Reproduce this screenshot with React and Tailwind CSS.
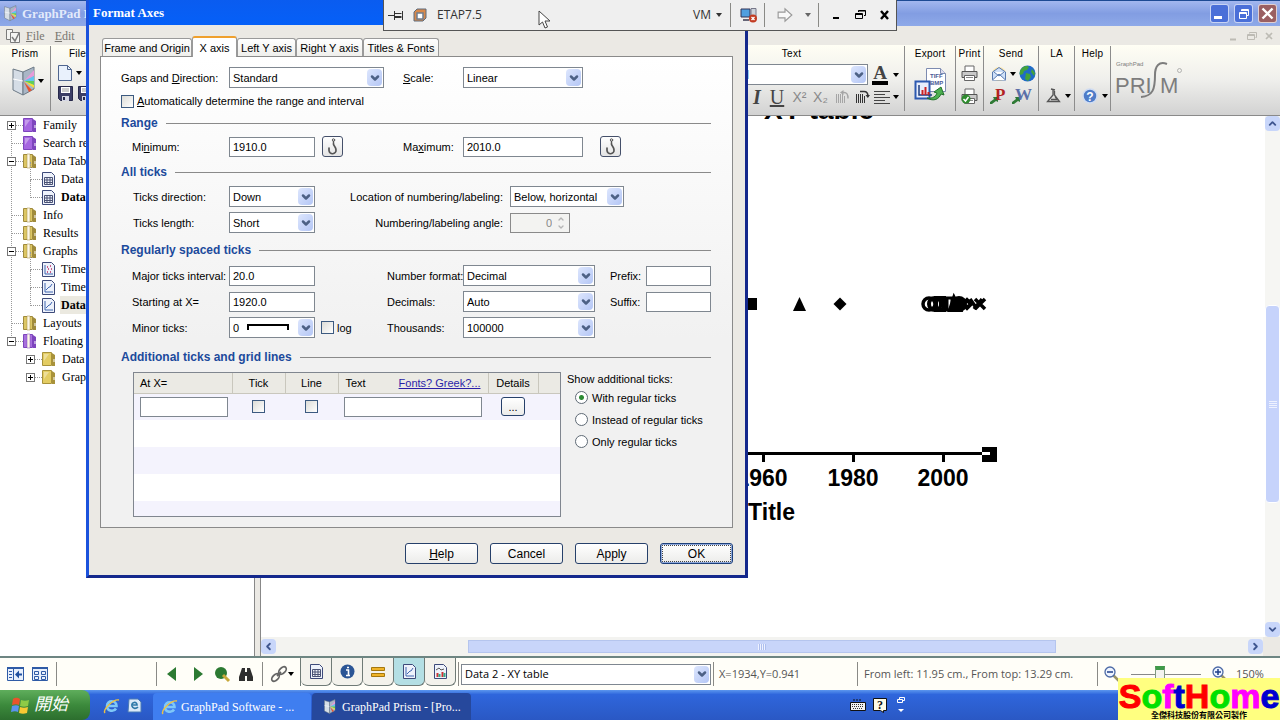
import { useState } from 'react'
import { ChevronDown, ChevronUp, ChevronLeft, ChevronRight } from 'lucide-react'

const UI = "font-['Liberation_Sans',Arial,sans-serif]"
const SERIF = "font-['Liberation_Serif',serif]"

/* ---------- small shared pieces ---------- */

function Caret({ className = 'text-black' }) {
  return (
    <svg width="6" height="4" viewBox="0 0 6 4" className={`shrink-0 ${className}`}>
      <path d="M0 0h6L3 4z" fill="currentColor" />
    </svg>
  )
}

function Select({ id, label, value, className = '', children }) {
  return (
    <div className={`relative h-[21px] shrink-0 ${className}`}>
      <select
        id={id}
        aria-label={label}
        defaultValue={value}
        className="block h-full w-full appearance-none border border-[#7f8790] bg-white pl-[3px] pr-4 text-black outline-none"
      >
        <option value={value}>{value}</option>
      </select>
      {children}
      <span className="pointer-events-none absolute inset-y-[2px] right-[2px] flex w-[15px] items-center justify-center rounded-sm bg-linear-to-br from-[#dde6fd] to-[#b4c6f5]">
        <ChevronDown size={12} strokeWidth={5} color="#4d6185" />
      </span>
    </div>
  )
}

function TextBox({ id, label, value = '', className = '' }) {
  return (
    <input
      id={id}
      aria-label={label}
      type="text"
      defaultValue={value}
      className={`h-5 shrink-0 border border-[#7f8790] bg-white px-[3px] outline-none ${className}`}
    />
  )
}

function Check({ id, label }) {
  return (
    <input
      id={id}
      aria-label={label}
      type="checkbox"
      className="block size-[13px] shrink-0 appearance-none border border-[#3c5a80] bg-linear-to-br from-[#dcdcd7] to-white checked:bg-[#21a121]"
    />
  )
}

function Section({ children, className = '' }) {
  return (
    <div className={`flex h-[14px] items-center gap-2 ${className}`}>
      <h2 className="text-[12px] leading-[14px] font-bold whitespace-nowrap text-[#1c4a9c]">{children}</h2>
      <div className="h-px flex-1 bg-[#8a8a8a]" />
    </div>
  )
}

function HookButton({ label, className = '' }) {
  return (
    <button
      type="button"
      aria-label={label}
      className={`flex size-[21px] shrink-0 items-center justify-center rounded-[3px] border border-[#45506a] bg-linear-to-b from-white to-[#e4e4e4] ${className}`}
    >
      <svg width="11" height="17" viewBox="0 0 11 17" fill="none" stroke="#555" strokeLinecap="round">
        <circle cx="6.5" cy="2" r="1.2" />
        <path d="M6.5 3.5V6" strokeWidth="1.4" />
        <path d="M6.5 6c0 2 2.5 3 2.5 6a3.5 3.5 0 0 1-7 .5L2 10" strokeWidth="1.7" />
      </svg>
    </button>
  )
}

function DialogButton({ children, focused }) {
  return (
    <button
      type="button"
      className={`h-[21px] w-[73px] rounded-[3px] border bg-linear-to-b from-white to-[#ececea] text-[12px] ${
        focused
          ? 'border-[#1c3f7a] shadow-[inset_0_0_0_1px_#8fa9dc] outline outline-1 -outline-offset-3 outline-dotted outline-[#444]'
          : 'border-[#26406a]'
      }`}
    >
      {children}
    </button>
  )
}

function PrismIcon({ size = 24 }) {
  return (
    <svg width={size} height={size * 1.25} viewBox="0 0 24 30" className="shrink-0">
      <path d="M1 3l10 3v23L1 24z" fill="#d5dde6" stroke="#6d7a86" />
      <path d="M11 6L22 1v22l-11 6z" fill="#a9b6c6" stroke="#6d7a86" />
      <path d="M12 15L22 4v6z" fill="#e79ad8" />
      <path d="M12 15l10-5v5z" fill="#62c5f0" />
      <path d="M12 15l10 0v4z" fill="#5fce5a" />
      <path d="M12 15l10 4v3z" fill="#f6e234" />
      <path d="M12 16l8 8-3 2z" fill="#e8532f" />
      <path d="M1 13l10 2" stroke="#fff" />
    </svg>
  )
}

/* ---------- main window chrome ---------- */

function TitleBar() {
  const btn = 'flex size-[19px] items-center justify-center rounded-[3px] border border-white/70'
  return (
    <header className="flex h-[26px] shrink-0 items-center border-t border-[#1d4a94] bg-linear-to-b from-[#a3b7ef] via-[#829de2] to-[#8ea9e8] pr-[3px] pl-1">
      <PrismIcon size={13} />
      <h1 className={`${SERIF} ml-[5px] flex-1 text-[13px] font-bold text-[#e3eafb]`}>GraphPad Prism</h1>
      <div className="flex gap-[5px]">
        <button type="button" aria-label="Minimize" className={`${btn} bg-[#4a6fd8]`}>
          <span className="mt-2 mr-1 h-[3px] w-2 bg-white" />
        </button>
        <button type="button" aria-label="Restore" className={`${btn} bg-[#4a6fd8]`}>
          <svg width="12" height="12" viewBox="0 0 12 12" fill="none" stroke="#fff">
            <path d="M3.500 3V1.500h7v6H9M3.500 2.500h7" />
            <path d="M1.500 4.500h7v6h-7zM1.500 5.500h7" />
          </svg>
        </button>
        <button type="button" aria-label="Close" className={`${btn} bg-[#9a5f62]`}>
          <svg width="13" height="13" viewBox="0 0 13 13" stroke="#fff" strokeWidth="2.400">
            <path d="M1.500 1.500l10 10M11.500 1.500l-10 10" />
          </svg>
        </button>
      </div>
    </header>
  )
}

function MenuBar() {
  return (
    <nav className={`${SERIF} flex h-[19px] shrink-0 items-center bg-[#ebe9e4] pr-[7px] pl-[5px] text-[12px] text-[#77756f]`}>
      <svg width="16" height="16" viewBox="0 0 16 16" fill="#f4f4f2" stroke="#7b7b7b">
        <path d="M1.500 1.500h6v10h-6z" />
        <path d="M5.500 4.500h9v10h-9z" />
        <path d="M7 9l3 4 4-8" fill="none" strokeWidth="1.500" />
      </svg>
      <a href="#file" className="ml-[5px]"><u>F</u>ile</a>
      <a href="#edit" className="ml-[10px]"><u>E</u>dit</a>
      <svg width="44" height="10" viewBox="0 0 44 10" fill="none" stroke="#bdbbb4" className="ml-auto">
        <path d="M1 8.500h6" strokeWidth="2" />
        <path d="M20.500 2.500v-1h7v5h-1M18.500 3.500h7v5h-7zM18.500 4.500h7" />
        <path d="M37 2l6 6M43 2l-6 6" strokeWidth="1.700" />
      </svg>
    </nav>
  )
}

function Group({ title, width, children }) {
  return (
    <section className={`flex shrink-0 flex-col border-r border-[#8c8c8c] ${width}`}>
      <h3 className="h-[15px] text-center text-[10px] leading-[15px] tracking-wide text-black">{title}</h3>
      {children}
    </section>
  )
}

function Floppy() {
  return (
    <svg width="15" height="15" viewBox="0 0 15 15" className="shrink-0">
      <path d="M.5.500h14v14h-12l-2-2z" fill="#3c3e66" stroke="#26284a" />
      <path d="M3 1h9v6H3z" fill="#fff" />
      <path d="M4 3h7M4 5h7" stroke="#999" />
      <path d="M4 10h7v5H4z" fill="#d5d7e4" />
      <path d="M5 11h2v3H5z" fill="#26284a" />
    </svg>
  )
}

function Printer({ ok }) {
  return (
    <svg width="17" height="17" viewBox="0 0 17 17">
      <path d="M4 1h9v6H4z" fill="#fff" stroke="#666" />
      <path d="M1 6.500h15v6H1z" fill="#c9c9c9" stroke="#555" />
      <path d="M3.500 10.500h10v5h-10z" fill="#fff" stroke="#666" />
      <path d="M5 12.500h7" stroke="#888" />
      {ok && (
        <>
          <circle cx="5" cy="11" r="4.500" fill="#2e8b2e" />
          <path d="M2.500 11l2 2 3-4" fill="none" stroke="#fff" strokeWidth="1.500" />
        </>
      )}
    </svg>
  )
}

function GreenArrow() {
  return (
    <svg width="8" height="8" viewBox="0 0 8 8" className="mt-[10px] shrink-0">
      <path d="M0 8V6l4-3-1-2h5v5L6 5 2 8z" fill="#2f7a35" />
    </svg>
  )
}

function Turn({ dim }) {
  return (
    <svg width="15" height="16" viewBox="0 0 15 16" className={dim ? 'text-[#a5a5a5]' : 'text-[#333]'} fill="none" stroke="currentColor">
      <path d="M1.500 5v9M3.500 5v9M5.500 5v9M7.500 5v9M9.500 7v7" />
      {dim ? (
        <>
          <path d="M7 3.500h2c3 0 4 1.500 4 6" strokeWidth="1.500" />
          <path d="M8.500 1v5L5 3.500z" fill="currentColor" stroke="none" />
        </>
      ) : (
        <>
          <path d="M5 2.500h4c3 0 4 1.500 4 5" strokeWidth="1.500" />
          <path d="M10.500 6h4.500l-2.200 3z" fill="currentColor" stroke="none" />
        </>
      )}
    </svg>
  )
}

function Ribbon() {
  return (
    <div className={`${UI} flex h-[71px] shrink-0 border-b border-[#8a8a8a] bg-linear-to-b from-[#fffef4] via-[#efefec] to-[#d2d2d2] pt-[1px] pb-1`}>
      <Group title="Prism" width="w-[51px]">
        <div className="flex items-center gap-[2px] pt-[5px] pl-3">
          <PrismIcon size={24} />
          <Caret />
        </div>
      </Group>
      <Group title="File" width="w-[54px]">
        <div className="flex items-center gap-1 pt-1 pl-[7px]">
          <svg width="14" height="16" viewBox="0 0 14 16">
            <path d="M.5.500h9l4 4v11H.5z" fill="#e9f1fc" stroke="#4f6690" />
            <path d="M9.500.500v4h4" fill="none" stroke="#4f6690" />
          </svg>
          <Caret />
        </div>
        <div className="flex gap-[5px] pt-[5px] pl-[7px]">
          <Floppy />
          <Floppy />
        </div>
      </Group>
      <div className="flex-1" />
      <Group title="Text" width="w-[226px]">
        <div className="flex items-center justify-end pt-[3px] pr-[5px] text-[12px]">
          <Select label="Font" value="Arial" className="w-[147px]" />
          <button type="button" aria-label="Text colour" className={`${SERIF} ml-1 h-[21px] w-[16px] border-b-4 border-black text-[19px] leading-[17px] font-bold text-[#444]`}>
            A
          </button>
          <Caret className="ml-[5px] text-black" />
        </div>
        <div className={`${SERIF} flex items-center justify-end pt-px pr-[5px] text-[20px] leading-[22px]`}>
          <button type="button" className="w-5 font-bold text-[#444] italic">I</button>
          <button type="button" className="w-5 text-[#444] underline">U</button>
          <button type="button" className={`${UI} ml-[2px] w-[21px] text-[14px] text-[#8a8a8a]`}>X²</button>
          <button type="button" className={`${UI} w-[21px] text-[14px] text-[#8a8a8a]`}>X₂</button>
          <button type="button" aria-label="Rotate left" className="ml-1"><Turn dim /></button>
          <button type="button" aria-label="Rotate right" className="ml-[5px]"><Turn /></button>
          <svg width="16" height="14" viewBox="0 0 16 14" stroke="#444" className="ml-1">
            <path d="M0 1.500h16M0 4.500h11M0 7.500h16M0 10.500h11M0 13.500h16" />
          </svg>
          <Caret className="ml-[3px] text-black" />
        </div>
      </Group>
      <Group title="Export" width="w-[51px]">
        <button type="button" aria-label="Export" className="mt-[6px] ml-[9px]">
          <svg width="34" height="36" viewBox="0 0 34 36">
            <path d="M12.500 1.500h14l5 5v18h-19z" fill="#fff" stroke="#7d8bb0" />
            <path d="M26.500 1.500v5h5" fill="#dde" stroke="#7d8bb0" />
            <path d="M1.500 14.500h14v17h-14z" fill="#e8eefc" stroke="#2c59b0" strokeWidth="2" />
            <path d="M5 18v10h13" fill="none" stroke="#1d3d80" strokeWidth="1.500" />
            <path d="M8.500 28v-5M11.500 28v-8M14.500 28v-3" stroke="#c22" strokeWidth="2" />
            <text x="16" y="11" fontSize="6" fontWeight="bold" fill="#4b5a96">TIFF</text>
            <text x="16" y="18" fontSize="6" fontWeight="bold" fill="#4b5a96">BMP</text>
            <path d="M13 31c6 1 9-2 10-5l-3-1 7-5 3 8-3-1c-2 5-7 8-14 4z" fill="#4caf50" stroke="#22722a" />
          </svg>
        </button>
      </Group>
      <Group title="Print" width="w-7">
        <div className="flex flex-col items-center gap-[6px] pt-1">
          <Printer />
          <Printer ok />
        </div>
      </Group>
      <Group title="Send" width="w-[55px]">
        <div className="flex items-center pt-1 pl-[7px]">
          <svg width="16" height="16" viewBox="0 0 16 16">
            <circle cx="8" cy="8" r="7" fill="#fde6a8" />
            <path d="M1.500 6L8 1.500 14.500 6v8h-13z" fill="#cfe0f8" stroke="#587ab0" />
            <path d="M1.500 14L8 8l6.500 6M3 6l5 4 5-4" fill="#fff" stroke="#587ab0" />
          </svg>
          <Caret className="ml-[3px] text-black" />
          <svg width="17" height="17" viewBox="0 0 17 17" className="ml-[3px]">
            <circle cx="8.500" cy="8.500" r="8" fill="#1f6bc8" />
            <path d="M3 3c3-3 6-2 7-1l-2 3-3 1-1 3-3 1c-1-3 0-5 2-7zM7 8l4 1 1 3-3 4-3-2zM13 4l3 4-1 3-3-4z" fill="#43a33c" />
          </svg>
        </div>
        <div className={`${SERIF} flex pt-1 pl-[6px] text-[17px] leading-[18px] font-bold`}>
          <GreenArrow />
          <span className="-ml-[3px] w-[17px] text-[#b32222]">P</span>
          <GreenArrow />
          <span className="-ml-[5px] text-[#5a6fa8]">W</span>
        </div>
      </Group>
      <Group title="LA" width="w-9">
        <div className="mt-auto flex items-center gap-1 pb-[7px] pl-[7px]">
          <svg width="15" height="16" viewBox="0 0 15 16" fill="none" stroke="#555" strokeWidth="1.300">
            <path d="M5 1l4 1M7 2v5L1.500 13.500h12L8.500 7V3" />
            <path d="M5 11.500h6l-2-3" />
          </svg>
          <Caret />
        </div>
      </Group>
      <Group title="Help" width="w-9">
        <div className="mt-auto flex items-center gap-1 pb-[7px] pl-[7px]">
          <svg width="16" height="16" viewBox="0 0 16 16">
            <circle cx="8" cy="8" r="7" fill="#4f7cc8" stroke="#cfdcf2" strokeWidth="1.500" />
            <text x="8" y="12.500" textAnchor="middle" fontSize="12" fontWeight="bold" fill="#fff">?</text>
          </svg>
          <Caret />
        </div>
      </Group>
      <div className="w-[169px] shrink-0 pt-3 pl-1">
        <svg width="70" height="48" viewBox="0 0 70 48" fill="#7d7d7d">
          <text x="1" y="8" fontSize="6">GraphPad</text>
          <text x="0" y="35" fontSize="22">PRI</text>
          <path d="M52 6c-8-3-12 2-12 11 0 14-2 21-14 22" fill="none" stroke="#7d7d7d" strokeWidth="2" />
          <text x="45" y="35" fontSize="22">M</text>
          <circle cx="64.500" cy="12.500" r="2" fill="none" stroke="#9a9a9a" strokeWidth=".7" />
        </svg>
      </div>
    </div>
  )
}

/* ---------- navigator ---------- */

const TREE = [
  { label: 'Family', icon: 'purple', toggle: '+' },
  { label: 'Search results', icon: 'purple' },
  { label: 'Data Tables', icon: 'open', toggle: '−' },
  { label: 'Data', icon: 'sheet', child: true },
  { label: 'Data', icon: 'sheet', child: true, bold: true },
  { label: 'Info', icon: 'open' },
  { label: 'Results', icon: 'open' },
  { label: 'Graphs', icon: 'open', toggle: '−' },
  { label: 'Time', icon: 'scatter', child: true },
  { label: 'Time', icon: 'graph', child: true },
  { label: 'Data', icon: 'graph', child: true, bold: true, selected: true },
  { label: 'Layouts', icon: 'open' },
  { label: 'Floating Notes', icon: 'purpleOpen', toggle: '−' },
  { label: 'Data', icon: 'yellow', child: true, toggle: '+' },
  { label: 'Graph', icon: 'yellow', child: true, toggle: '+' },
]

const FOLDERS = {
  purple: ['#a566e0', '#7d45bd', false],
  yellow: ['#e3cc62', '#a8923a', false],
  open: ['#dcc664', '#a08b3c', true],
  purpleOpen: ['#a770dc', '#7d45bd', true],
}

function TreeIcon({ type }) {
  if (FOLDERS[type]) {
    const [fill, edge, open] = FOLDERS[type]
    return (
      <svg width="14" height="16" viewBox="0 0 14 16" className="shrink-0">
        <path d="M.5 1.500h9v13h-9z" fill={fill} stroke={edge} />
        <path d="M10 2l3 2v11l-3 0z" fill={edge} />
        <path d="M11 8h2v3h-2z" fill="#fff" opacity=".5" />
        {open ? <path d="M4 1h3v14H4z" fill="#fdf8e6" stroke={edge} strokeWidth=".5" /> : <path d="M2 3l5 0-5 7z" fill="#fff" opacity=".35" />}
      </svg>
    )
  }
  return (
    <svg width="13" height="15" viewBox="0 0 13 15" className="shrink-0" fill="none">
      <path d="M.5.500h9l3 3v11H.5z" fill="#eef2fb" stroke="#3d4a7a" />
      {type === 'sheet' && <path d="M2.500 5.500h8v7h-8zM2.500 8h8M2.500 10.500h8M5 5.500v7M8 5.500v7" stroke="#4a5274" />}
      {type === 'graph' && <path d="M3 3v9h8M4 10l3-3 1 0 2-3" stroke="#3f66b0" />}
      {type === 'scatter' && (
        <>
          <path d="M3 3v9h8" stroke="#3f66b0" />
          <path d="M5 5h1M8 4h1M6 7h1M9 7h1M5 10h1M8 10h1" stroke="#c02860" strokeWidth="1.500" />
        </>
      )}
    </svg>
  )
}

function Navigator() {
  return (
    <aside className={`${SERIF} w-[255px] shrink-0 overflow-hidden border-r border-[#888] bg-white text-[12px]`}>
      <ul className="relative">
        <span className="absolute top-2 left-[11px] h-[216px] border-l border-dotted border-[#999]" />
        {TREE.map((item, i) => (
          <li key={i} className={`flex h-[18px] items-center ${item.child ? 'pl-[26px]' : 'pl-[7px]'}`}>
            <span className="relative flex w-4 items-center">
              {item.toggle ? (
                <button type="button" aria-label="Toggle" className="flex size-[9px] items-center justify-center border border-[#777] bg-white">
                  <svg width="5" height="5" viewBox="0 0 5 5" stroke="#000">
                    <path d={item.toggle === '+' ? 'M0 2.500h5M2.500 0v5' : 'M0 2.500h5'} />
                  </svg>
                </button>
              ) : (
                <span className="ml-1 w-0" />
              )}
              <span className="flex-1 border-t border-dotted border-[#999]" />
              {item.child && !item.toggle && <span className="absolute bottom-0 left-1 h-[18px] border-l border-dotted border-[#999]" />}
            </span>
            <TreeIcon type={item.icon} />
            <span className={`ml-[5px] px-px whitespace-nowrap ${item.bold ? 'font-bold' : ''} ${item.selected ? 'bg-[#ebe9e0]' : ''}`}>{item.label}</span>
          </li>
        ))}
      </ul>
    </aside>
  )
}

/* ---------- graph sheet ---------- */

function Graph() {
  return (
    <svg className={`${UI} block h-full w-full bg-white`} fill="#000">
      <g transform="translate(-261 -116)">
        <g fontWeight="bold" fontSize="23">
          <text x="819" y="119" fontSize="28" textAnchor="middle">XY table</text>
          <text x="762" y="486" textAnchor="middle">1960</text>
          <text x="853" y="486" textAnchor="middle">1980</text>
          <text x="943" y="486" textAnchor="middle">2000</text>
          <text x="795" y="520" textAnchor="end">X Title</text>
        </g>
        <path d="M400 453.500h590M763.500 453v9M853.500 453v9M943.500 453v9" stroke="#000" strokeWidth="3" fill="none" />
        <path d="M982 447h15v15h-15z" />
        <path d="M982 453.500h8" stroke="#fff" strokeWidth="3" />
        <path d="M746 298h11v12h-11z" />
        <path d="M799.500 297l6.500 14h-13z" />
        <path d="M840 297.500l6.500 6.500-6.500 6.500-6.500-6.500z" />
        <g fill="none" stroke="#000" strokeWidth="3">
          <circle cx="929" cy="304" r="6" strokeWidth="3.500" />
          <circle cx="935" cy="304" r="6" strokeWidth="4" />
          <path d="M936 298h8v12h-8z" strokeWidth="4" />
          <path d="M947 298h5v12h-5z" />
          <path d="M954 298l6 12h-10z" strokeWidth="4" />
          <circle cx="959" cy="304" r="4" strokeWidth="8" />
          <path d="M963 304l4-4 4 4-4 4z" strokeWidth="4" />
          <path d="M970 299l7 10M974 309l8-10M975 299l10 10M975 309l10-10" strokeWidth="3.500" />
        </g>
      </g>
    </svg>
  )
}

const SCROLL_BTN = 'flex size-[15px] shrink-0 items-center justify-center rounded-sm bg-[#c8d6fa] text-[#3f5690]'

function Workspace() {
  return (
    <main className="ml-[5px] flex min-w-0 flex-1 flex-col border-l border-[#888]">
      <div className="flex min-h-0 flex-1">
        <div className="min-w-0 flex-1">
          <Graph />
        </div>
        <div className="flex w-[15px] shrink-0 flex-col bg-[#f6f6f3]">
          <button type="button" aria-label="Scroll up" className={SCROLL_BTN}><ChevronUp size={11} strokeWidth={4} /></button>
          <div className="flex-[175]" />
          <div className="flex flex-[197] items-center justify-center rounded-sm border border-white bg-[#c6d3fb]">
            <span className="h-[7px] w-2 border-y border-[#eef2ff] bg-[repeating-linear-gradient(#c6d3fb_0_1px,#eef2ff_1px_2px)]" />
          </div>
          <div className="flex-[119]" />
          <button type="button" aria-label="Scroll down" className={SCROLL_BTN}><ChevronDown size={11} strokeWidth={4} /></button>
        </div>
      </div>
      <div className="flex h-[19px] shrink-0 items-center bg-[#f3f3f0]">
        <button type="button" aria-label="Scroll left" className={SCROLL_BTN}><ChevronLeft size={11} strokeWidth={4} /></button>
        <div className="flex-[192]" />
        <div className="flex h-[13px] flex-[588] items-center justify-center border border-[#b5c5ee] bg-[#c8d5fa]">
          <span className="h-[6px] w-2 bg-[repeating-linear-gradient(90deg,#eef2ff_0_1px,#aebfee_1px_2px)]" />
        </div>
        <div className="flex-[192]" />
        <button type="button" aria-label="Scroll right" className={SCROLL_BTN}><ChevronRight size={11} strokeWidth={4} /></button>
        <div className="h-full w-[17px] shrink-0 bg-[#ebe9e4]" />
      </div>
    </main>
  )
}

/* ---------- status bar ---------- */

function Rule({ className = '' }) {
  return <span className={`h-6 w-px shrink-0 bg-[#8a8a86] ${className}`} />
}

function SheetTab({ label, active, children }) {
  return (
    <button
      type="button"
      aria-label={label}
      className={`flex h-[28px] w-[31px] items-center justify-center rounded-b-md border-r border-b border-[#6f7a76] ${active ? 'bg-[#b4dfe4]' : 'bg-[#f3f2ec]'}`}
    >
      {children}
    </button>
  )
}

function Magnifier({ plus }) {
  return (
    <svg width="16" height="16" viewBox="0 0 16 16" fill="none">
      <path d="M9 9l6 6" stroke="#9a9468" strokeWidth="2.500" />
      <circle cx="6" cy="6" r="5" fill="#eef4ff" stroke="#4d6aa6" strokeWidth="1.300" />
      <path d={plus ? 'M3 6h6M6 3v6' : 'M3 6h6'} stroke="#1f3f8a" strokeWidth="1.500" />
    </svg>
  )
}

function StatusBar() {
  return (
    <footer className="flex h-[34px] shrink-0 border-t-2 border-[#6d8582] bg-[#fffef8] font-['Open_Sans',sans-serif] text-[11px] text-[#555]">
      <div className="flex w-full items-center">
        <svg width="42" height="16" viewBox="0 0 42 16" fill="none" stroke="#2f5ba6" className="ml-[7px] shrink-0">
          <path d="M.5 1.500h16v13H.5z" fill="#e8f0fc" /><path d="M0 2h17" strokeWidth="2" />
          <path d="M2 5.500h3M2 8.500h3M2 11.500h3M6.500 3v11" />
          <path d="M8 8.500l4-4v3h3v2h-3v3z" fill="#1f4f9f" stroke="none" />
          <path d="M25.500 1.500h15v13h-15z" fill="#e8f0fc" /><path d="M25 2h16" strokeWidth="2" />
          <path d="M27.500 5.500h4v3h-4zM34.500 5.500h4v3h-4zM27.500 10.500h4v3h-4zM34.500 10.500h4v3h-4z" />
        </svg>
        <Rule className="ml-[7px]" />
        <Rule className="ml-[99px]" />
        <svg width="90" height="18" viewBox="0 0 90 18" className="ml-[9px] shrink-0">
          <path d="M10 2v14L1 9z" fill="#2c7a32" /><path d="M28 2v14l9-7z" fill="#2c7a32" />
          <circle cx="55" cy="8" r="6" fill="#2c7a32" /><path d="M57 10l6 6" stroke="#c7a83a" strokeWidth="3" />
          <path d="M76 3h3v4h2V3h3l3 9v4h-6v-5h-2v5h-6v-4z" fill="#2e2e2e" />
        </svg>
        <Rule className="ml-[6px]" />
        <svg width="18" height="18" viewBox="0 0 18 18" fill="none" stroke="#666" strokeWidth="1.800" className="ml-[7px] shrink-0">
          <ellipse cx="12.500" cy="5.500" rx="4.500" ry="2.800" transform="rotate(-45 12.500 5.500)" />
          <ellipse cx="5.500" cy="12.500" rx="4.500" ry="2.800" transform="rotate(-45 5.500 12.500)" />
          <path d="M7 11l4-4" />
        </svg>
        <Caret className="text-black" />
        <div className="ml-[6px] flex shrink-0 self-start border-l border-[#6f7a76]">
          <SheetTab label="Data"><TreeIcon type="sheet" /></SheetTab>
          <SheetTab label="Info">
            <svg width="15" height="15" viewBox="0 0 15 15"><circle cx="7.500" cy="7.500" r="7" fill="#2b5595" /><path d="M6 6h2.500v5.500M6 11.500h4M7 3.500h2" stroke="#fff" strokeWidth="1.600" fill="none" /></svg>
          </SheetTab>
          <SheetTab label="Results">
            <svg width="14" height="10" viewBox="0 0 14 10" fill="#f0b429" stroke="#a5780e"><path d="M.5.500h13v3H.5zM.5 6.500h13v3H.5z" /></svg>
          </SheetTab>
          <SheetTab label="Graphs" active><TreeIcon type="graph" /></SheetTab>
          <SheetTab label="Layouts">
            <svg width="13" height="15" viewBox="0 0 13 15" fill="none"><path d="M.5.500h9l3 3v11H.5z" fill="#eef2fb" stroke="#3d4a7a" /><path d="M2 6l3-2 2 2 3-1" stroke="#555" /><path d="M3.500 13V9M8.500 13v-5" stroke="#c33" strokeWidth="2" /><path d="M5.500 13v-3M10.500 13v-4" stroke="#3a8" strokeWidth="2" /></svg>
          </SheetTab>
        </div>
        <Rule className="ml-[2px]" />
        <Select label="Sheet" value="Data 2 - XY table" className="ml-[2px] w-[250px]" />
        <Rule className="ml-[2px]" />
        <span className="ml-[5px] w-[138px] shrink-0 whitespace-nowrap">X=1934,Y=0.941</span>
        <Rule />
        <span className="ml-[6px] flex-1 whitespace-nowrap">From left: 11.95 cm., From top: 13.29 cm.</span>
        <Rule />
        <div className="flex w-[182px] shrink-0 items-center pl-[6px]">
          <Magnifier />
          <input
            type="range"
            aria-label="Zoom"
            defaultValue="40"
            className="mx-[11px] h-4 w-[70px] appearance-none bg-[linear-gradient(#888,#888)] bg-[length:100%_1px] bg-center bg-no-repeat [&::-webkit-slider-thumb]:h-4 [&::-webkit-slider-thumb]:w-[10px] [&::-webkit-slider-thumb]:appearance-none [&::-webkit-slider-thumb]:border [&::-webkit-slider-thumb]:border-t-4 [&::-webkit-slider-thumb]:border-[#7f9a80] [&::-webkit-slider-thumb]:border-t-[#3f9a4a] [&::-webkit-slider-thumb]:bg-[#f3f3f0]"
          />
          <Magnifier plus />
          <span className="ml-2">150%</span>
        </div>
      </div>
    </footer>
  )
}

/* ---------- taskbar ---------- */

function IE() {
  return (
    <svg width="17" height="17" viewBox="0 0 17 17" fill="none" className="shrink-0">
      <path d="M4 9h9.500c0-6-9.500-6.500-9.500 0 0 5.500 7 6 9 2.500" stroke="#7fc8f8" strokeWidth="2.600" />
      <path d="M2 16c-3-3 8-14 14-13" stroke="#f0c340" strokeWidth="1.400" />
    </svg>
  )
}

function Taskbar() {
  return (
    <div className={`${SERIF} flex h-[30px] shrink-0 items-stretch bg-linear-to-b from-[#5c96ee] via-[#2f66dc] via-15% to-[#2a58c4] text-[12px] text-white`}>
      <button
        type="button"
        className="flex w-[90px] items-center gap-1 rounded-r-lg bg-linear-to-b from-[#5fae5c] via-[#3c8a3c] to-[#2c6e2e] pl-[11px] font-['Liberation_Serif','Noto_Sans_CJK_TC',serif] text-[17px] italic"
      >
        <svg width="19" height="18" viewBox="0 0 19 18">
          <path d="M2 3c3-2 5-1 7 0L8 9C6 8 4 8 1 9z" fill="#e8542c" />
          <path d="M10 4c3 1 5 1 8 0l-1 6c-3 1-5 1-8 0z" fill="#8ecb46" />
          <path d="M1 10c3-1 5-1 7 0l-1 6c-2-1-4-1-7 0z" fill="#5a93ee" />
          <path d="M9 11c3 1 5 1 8 0l-1 6c-3 1-5 1-8 0z" fill="#f7c933" />
        </svg>
        開始
      </button>
      <div className="flex w-[63px] items-center gap-[6px] pl-[13px]">
        <IE />
        <svg width="16" height="16" viewBox="0 0 16 16"><path d="M3 2h9l3 3v10H2z" fill="#dbe9f8" stroke="#4a7ab5" /><path d="M6 8h5c0-4-6-3-5 1 1 3 4 3 6 1" fill="none" stroke="#2e78a8" strokeWidth="1.700" /></svg>
      </div>
      <button type="button" className="mt-[3px] flex w-[158px] items-center gap-[3px] rounded-t-sm bg-[#3f7ef0] pl-2">
        <IE />
        GraphPad Software - ...
      </button>
      <button type="button" className="mt-[3px] ml-px flex w-[159px] items-center gap-[6px] rounded-t-sm bg-[#26489c] pl-3">
        <PrismIcon size={12} />
        GraphPad Prism - [Pro...
      </button>
      <div className="ml-[379px] flex items-center gap-[7px]">
        <svg width="16" height="12" viewBox="0 0 16 12"><path d="M3 1h8" stroke="#111" strokeDasharray="2 1" /><path d="M.5 3.500h15v8H.5z" fill="#f2f2f2" stroke="#111" /><path d="M2 5.500h12M2 7.500h12M3 9.500h10" stroke="#333" strokeDasharray="1 1" /></svg>
        <svg width="14" height="15" viewBox="0 0 14 15"><path d="M.5.500h13v12h-3v2l-3-2h-7z" fill="#fffbe6" stroke="#111" /><text x="7" y="11" textAnchor="middle" fontSize="12" fontWeight="bold" fill="#111">?</text></svg>
        <svg width="10" height="18" viewBox="0 0 10 18" fill="none" stroke="#fff" className="ml-[2px]"><path d="M3.500 3V1.500h5v3H7M1.500 3.500h5v3h-5z" /><path d="M2 13h6l-3 3z" fill="#fff" stroke="none" /></svg>
      </div>
    </div>
  )
}

/* ---------- Format Axes dialog ---------- */

const TABS = [
  { name: 'Frame and Origin', width: 'w-[90px]' },
  { name: 'X axis', width: 'w-[45px]' },
  { name: 'Left Y axis', width: 'w-[59px]' },
  { name: 'Right Y axis', width: 'w-[67px]' },
  { name: 'Titles & Fonts', width: 'w-[76px]' },
]

const SHOW = ['With regular ticks', 'Instead of regular ticks', 'Only regular ticks']

function TicksTable() {
  const th = 'border-r border-[#c9c7bd] font-normal'
  return (
    <div className="h-[145px] w-[428px] shrink-0 overflow-hidden border border-[#80868f] bg-white">
      <table className="w-full table-fixed border-collapse">
        <colgroup>
          <col className="w-[98px]" />
          <col className="w-[53px]" />
          <col className="w-[53px]" />
          <col className="w-[150px]" />
          <col className="w-[50px]" />
          <col />
        </colgroup>
        <thead>
          <tr className="h-5 border-b border-[#c9c7bd] bg-[#ebeae4]">
            <th className={`${th} pl-[6px] text-left`}>At X=</th>
            <th className={th}>Tick</th>
            <th className={th}>Line</th>
            <th className={`${th} px-[7px]`}>
              <span className="flex justify-between">
                Text
                <a href="#fonts" className="text-[#2a1fa8] underline">Fonts? Greek?...</a>
              </span>
            </th>
            <th className={th}>Details</th>
            <th />
          </tr>
        </thead>
        <tbody>
          <tr className="h-[27px] bg-[#f4f3fd]">
            <td className="pl-[6px]"><TextBox label="At X" className="block w-[88px]" /></td>
            <td><span className="flex justify-center"><Check label="Tick" /></span></td>
            <td><span className="flex justify-center"><Check label="Line" /></span></td>
            <td className="px-[6px]"><TextBox label="Text" className="block w-full" /></td>
            <td>
              <button type="button" aria-label="Details" className="mx-auto block h-[19px] w-6 rounded-[3px] border border-[#26406a] bg-linear-to-b from-white to-[#ececea]">...</button>
            </td>
            <td />
          </tr>
          {[0, 1, 2, 3].map((row) => (
            <tr key={row} className={`h-[27px] ${row % 2 ? 'bg-[#f4f3fd]' : 'bg-white'}`}>
              <td colSpan={6} />
            </tr>
          ))}
        </tbody>
      </table>
    </div>
  )
}

function FormatAxes() {
  const [tab, setTab] = useState('X axis')
  const [show, setShow] = useState(SHOW[0])
  const regular = 'grid h-[21px] grid-cols-[108px_158px_76px_147px_36px_65px] items-center'

  return (
    <div
      role="dialog"
      aria-label="Format Axes"
      className={`${UI} absolute top-0 left-[86px] w-[662px] border-x-3 border-b-3 border-l-[#1b52dc] border-r-[#14288c] border-b-[#14288c] bg-[#ebe9e4] text-[11px] leading-[14px] text-black`}
    >
      <div className={`${SERIF} h-[25px] bg-linear-to-b from-[#0a5cf0] to-[#0560f8] pl-1 text-[13px] leading-[25px] font-bold text-white`}>
        Format Axes
      </div>

      <div className="pt-[11px] pr-[12px] pb-[11px] pl-[11px]">
        <div role="tablist" className="flex h-5 items-end pl-[2px]">
          {TABS.map((t) => (
            <button
              key={t.name}
              type="button"
              role="tab"
              aria-selected={tab === t.name}
              onClick={() => setTab(t.name)}
              className={`${t.width} whitespace-nowrap ${
                tab === t.name
                  ? 'relative z-10 -mb-px h-[21px] rounded-t-[3px] border-x border-t-2 border-x-[#9a9a9a] border-t-[#efa02e] bg-white'
                  : 'h-[18px] rounded-t-[3px] border border-b-0 border-[#9a9a9a] bg-linear-to-b from-white to-[#efefec]'
              }`}
            >
              {t.name}
            </button>
          ))}
        </div>

        <div className="border border-[#8a8a8a] bg-linear-to-b from-white to-[#f1f1f1] to-60% pt-[10px] pr-[21px] pb-[10px] pl-[20px]">
          <div className="grid h-[21px] grid-cols-[108px_174px_60px_1fr] items-center">
            <label htmlFor="gaps">Gaps and <u>D</u>irection:</label>
            <Select id="gaps" value="Standard" className="w-[155px]" />
            <label htmlFor="scale"><u>S</u>cale:</label>
            <Select id="scale" value="Linear" className="w-[120px]" />
          </div>
          <div className="mt-[6px] flex h-[14px] items-center gap-[3px]">
            <Check id="auto" />
            <label htmlFor="auto"><u>A</u>utomatically determine the range and interval</label>
          </div>

          <Section className="mt-2">Range</Section>
          <div className="mt-[6px] grid h-[21px] grid-cols-[108px_174px_60px_1fr] items-center">
            <label htmlFor="min" className="pl-[11px]">Mi<u>n</u>imum:</label>
            <div className="flex items-center gap-[7px]">
              <TextBox id="min" value="1910.0" className="w-[86px]" />
              <HookButton label="Pick minimum" />
            </div>
            <label htmlFor="max">Ma<u>x</u>imum:</label>
            <div className="flex items-center gap-[17px]">
              <TextBox id="max" value="2010.0" className="w-[120px]" />
              <HookButton label="Pick maximum" />
            </div>
          </div>

          <Section className="mt-2">All ticks</Section>
          <div className="mt-[7px] grid grid-cols-[108px_86px_188px_1fr] items-center gap-y-[5px]">
            <label htmlFor="dir" className="pl-3">Ticks direction:</label>
            <Select id="dir" value="Down" />
            <label htmlFor="loc" className="text-right">Location of numbering/labeling:</label>
            <Select id="loc" value="Below, horizontal" className="ml-[7px] w-[114px]" />
            <label htmlFor="len" className="pl-3">Ticks length:</label>
            <Select id="len" value="Short" />
            <label htmlFor="angle" className="text-right">Numbering/labeling angle:</label>
            <div className="relative ml-[7px] w-[60px]">
              <input id="angle" type="text" defaultValue="0" disabled className="block h-5 w-full border border-[#8a8a8a] bg-[#f3f3f1] pr-[17px] text-right text-[#888]" />
              <span className="absolute inset-y-[2px] right-[2px] flex w-[14px] flex-col items-center justify-center text-[#b5b5b5]">
                <ChevronUp size={8} strokeWidth={4} />
                <ChevronDown size={8} strokeWidth={4} />
              </span>
            </div>
          </div>

          <Section className="mt-[10px]">Regularly spaced ticks</Section>
          <div className="mt-2 flex flex-col gap-[5px]">
            <div className={regular}>
              <label htmlFor="major" className="pl-[11px] whitespace-nowrap">Major ticks interval:</label>
              <TextBox id="major" value="20.0" className="w-[86px]" />
              <label htmlFor="format" className="whitespace-nowrap">Number format:</label>
              <Select id="format" value="Decimal" className="w-[132px]" />
              <label htmlFor="prefix">Prefix:</label>
              <TextBox id="prefix" className="w-full" />
            </div>
            <div className={regular}>
              <label htmlFor="start" className="pl-[11px]">Starting at X=</label>
              <TextBox id="start" value="1920.0" className="w-[86px]" />
              <label htmlFor="decimals">Decimals:</label>
              <Select id="decimals" value="Auto" className="w-[132px]" />
              <label htmlFor="suffix">Suffix:</label>
              <TextBox id="suffix" className="w-full" />
            </div>
            <div className={regular}>
              <label htmlFor="minor" className="pl-[11px]">Minor ticks:</label>
              <div className="flex items-center">
                <Select id="minor" value="0" className="w-[86px]">
                  <svg width="42" height="7" viewBox="0 0 42 7" fill="none" stroke="#000" strokeWidth="2" className="pointer-events-none absolute top-[7px] left-[18px]">
                    <path d="M1 6V1h40v5" />
                  </svg>
                </Select>
                <span className="ml-[6px] flex items-center gap-[3px]">
                  <Check id="log" />
                  <label htmlFor="log">log</label>
                </span>
              </div>
              <label htmlFor="thousands">Thousands:</label>
              <Select id="thousands" value="100000" className="w-[132px]" />
            </div>
          </div>

          <Section className="mt-3">Additional ticks and grid lines</Section>
          <div className="mt-2 flex pl-3">
            <TicksTable />
            <fieldset className="ml-[6px]">
              <legend className="h-[18px]">Show additional ticks:</legend>
              <div className="flex flex-col gap-[7px] pl-2">
                {SHOW.map((s) => (
                  <label key={s} className="flex h-[15px] items-center gap-[4px] whitespace-nowrap">
                    <input
                      type="radio"
                      name="show"
                      checked={show === s}
                      onChange={() => setShow(s)}
                      className="size-[13px] appearance-none rounded-full border border-[#5f6a75] bg-white checked:bg-[radial-gradient(circle,#2c8a34_0_2px,#ffffff_3px)]"
                    />
                    {s}
                  </label>
                ))}
              </div>
            </fieldset>
          </div>
        </div>

        <div className="mt-[15px] flex justify-end gap-3">
          <DialogButton><u>H</u>elp</DialogButton>
          <DialogButton>Cancel</DialogButton>
          <DialogButton>Apply</DialogButton>
          <DialogButton focused>OK</DialogButton>
        </div>
      </div>
    </div>
  )
}

/* ---------- virtual machine toolbar ---------- */

function VmBar() {
  return (
    <div className="absolute top-0 left-[383px] flex h-[31px] w-[514px] items-center border border-t-0 border-[#555] bg-[#efefef] font-['Open_Sans',sans-serif] text-[12px] text-[#333]">
      <svg width="17" height="11" viewBox="0 0 17 11" fill="none" stroke="#333" className="ml-1 shrink-0">
        <path d="M0 5.500h6M6.500 1v9M6.500 3.500h7M6.500 7.500h7M6.500 6.500h7M14.500 1v9" />
      </svg>
      <svg width="14" height="14" viewBox="0 0 14 14" className="ml-2 shrink-0">
        <path d="M4 1h9v9l-3 3H1V4z" fill="#d8894a" stroke="#5d6b7c" />
        <path d="M4 5h6v6H4z" fill="#fff" stroke="#6f7e90" strokeWidth="1.500" />
      </svg>
      <span className="ml-[10px] flex-1">ETAP7.5</span>
      <button type="button" className="flex items-center gap-[5px]">VM <Caret className="text-[#333]" /></button>
      <Rule className="ml-2" />
      <svg width="18" height="16" viewBox="0 0 18 16" className="ml-[9px] shrink-0">
        <path d="M1 2h9v8H1z" fill="#4f9fe0" stroke="#335" />
        <path d="M3 12h6v2H3z" fill="#667" />
        <path d="M11 1.500h5v11h-5z" fill="#ccd2da" stroke="#778" />
        <circle cx="13" cy="11.500" r="4" fill="#c23b22" />
        <path d="M11.500 10l3 3M14.500 10l-3 3" stroke="#fff" strokeWidth="1.300" />
      </svg>
      <Rule className="ml-[6px]" />
      <svg width="16" height="16" viewBox="0 0 14 14" fill="#f8f8f8" stroke="#999" className="ml-3 shrink-0">
        <path d="M1 4.500h6v-3l6 5.500-6 5.500v-3H1z" />
      </svg>
      <Caret className="ml-3 text-[#666]" />
      <Rule className="ml-[7px]" />
      <svg width="56" height="12" viewBox="0 0 56 12" fill="none" stroke="#000" className="mr-[7px] ml-[14px] shrink-0">
        <path d="M0 9h6" strokeWidth="2" />
        <path d="M25.500 3V1.500h7v5H31M22.500 4.500h7v5h-7zM22.500 5.500h7M25.500 2h7" />
        <path d="M48 2l7 8M55 2l-7 8" strokeWidth="2.400" />
      </svg>
    </div>
  )
}

function Pointer() {
  return (
    <svg width="13" height="20" viewBox="0 0 13 20" className="pointer-events-none absolute top-[10px] left-[538px]">
      <path d="M1 1v14l3.500-3 2.500 6 2.500-1-2.500-6h5z" fill="#fff" stroke="#444" />
    </svg>
  )
}

const SOFTHOME = [
  ['S', 'text-[#ff0000]'],
  ['o', 'text-[#00e000]'],
  ['f', 'text-[#ff00ff]'],
  ['t', 'text-[#0000d0]'],
  ['H', 'text-[#ff0000]'],
  ['o', 'text-[#00e000]'],
  ['m', 'text-[#ff00ff]'],
  ['e', 'text-[#0000d0]'],
]

function Watermark() {
  return (
    <div className="absolute right-0 bottom-0 h-[42px] w-[162px] bg-[#ffff80] text-center">
      <div className={`${UI} pt-1 text-[34px] leading-7 font-bold [-webkit-text-stroke:1px_currentColor]`}>
        {SOFTHOME.map(([ch, color], i) => (
          <span key={i} className={color}>{ch}</span>
        ))}
      </div>
      <div className="font-['Noto_Sans_CJK_TC',sans-serif] text-[8px] leading-[9px] font-bold text-black">全傑科技股份有限公司製作</div>
    </div>
  )
}

export default function App() {
  return (
    <div className="relative flex h-screen w-full flex-col overflow-hidden bg-[#ebe9e4]">
      <TitleBar />
      <MenuBar />
      <Ribbon />
      <div className="flex min-h-0 flex-1">
        <Navigator />
        <Workspace />
      </div>
      <StatusBar />
      <Taskbar />
      <FormatAxes />
      <VmBar />
      <Pointer />
      <Watermark />
    </div>
  )
}
